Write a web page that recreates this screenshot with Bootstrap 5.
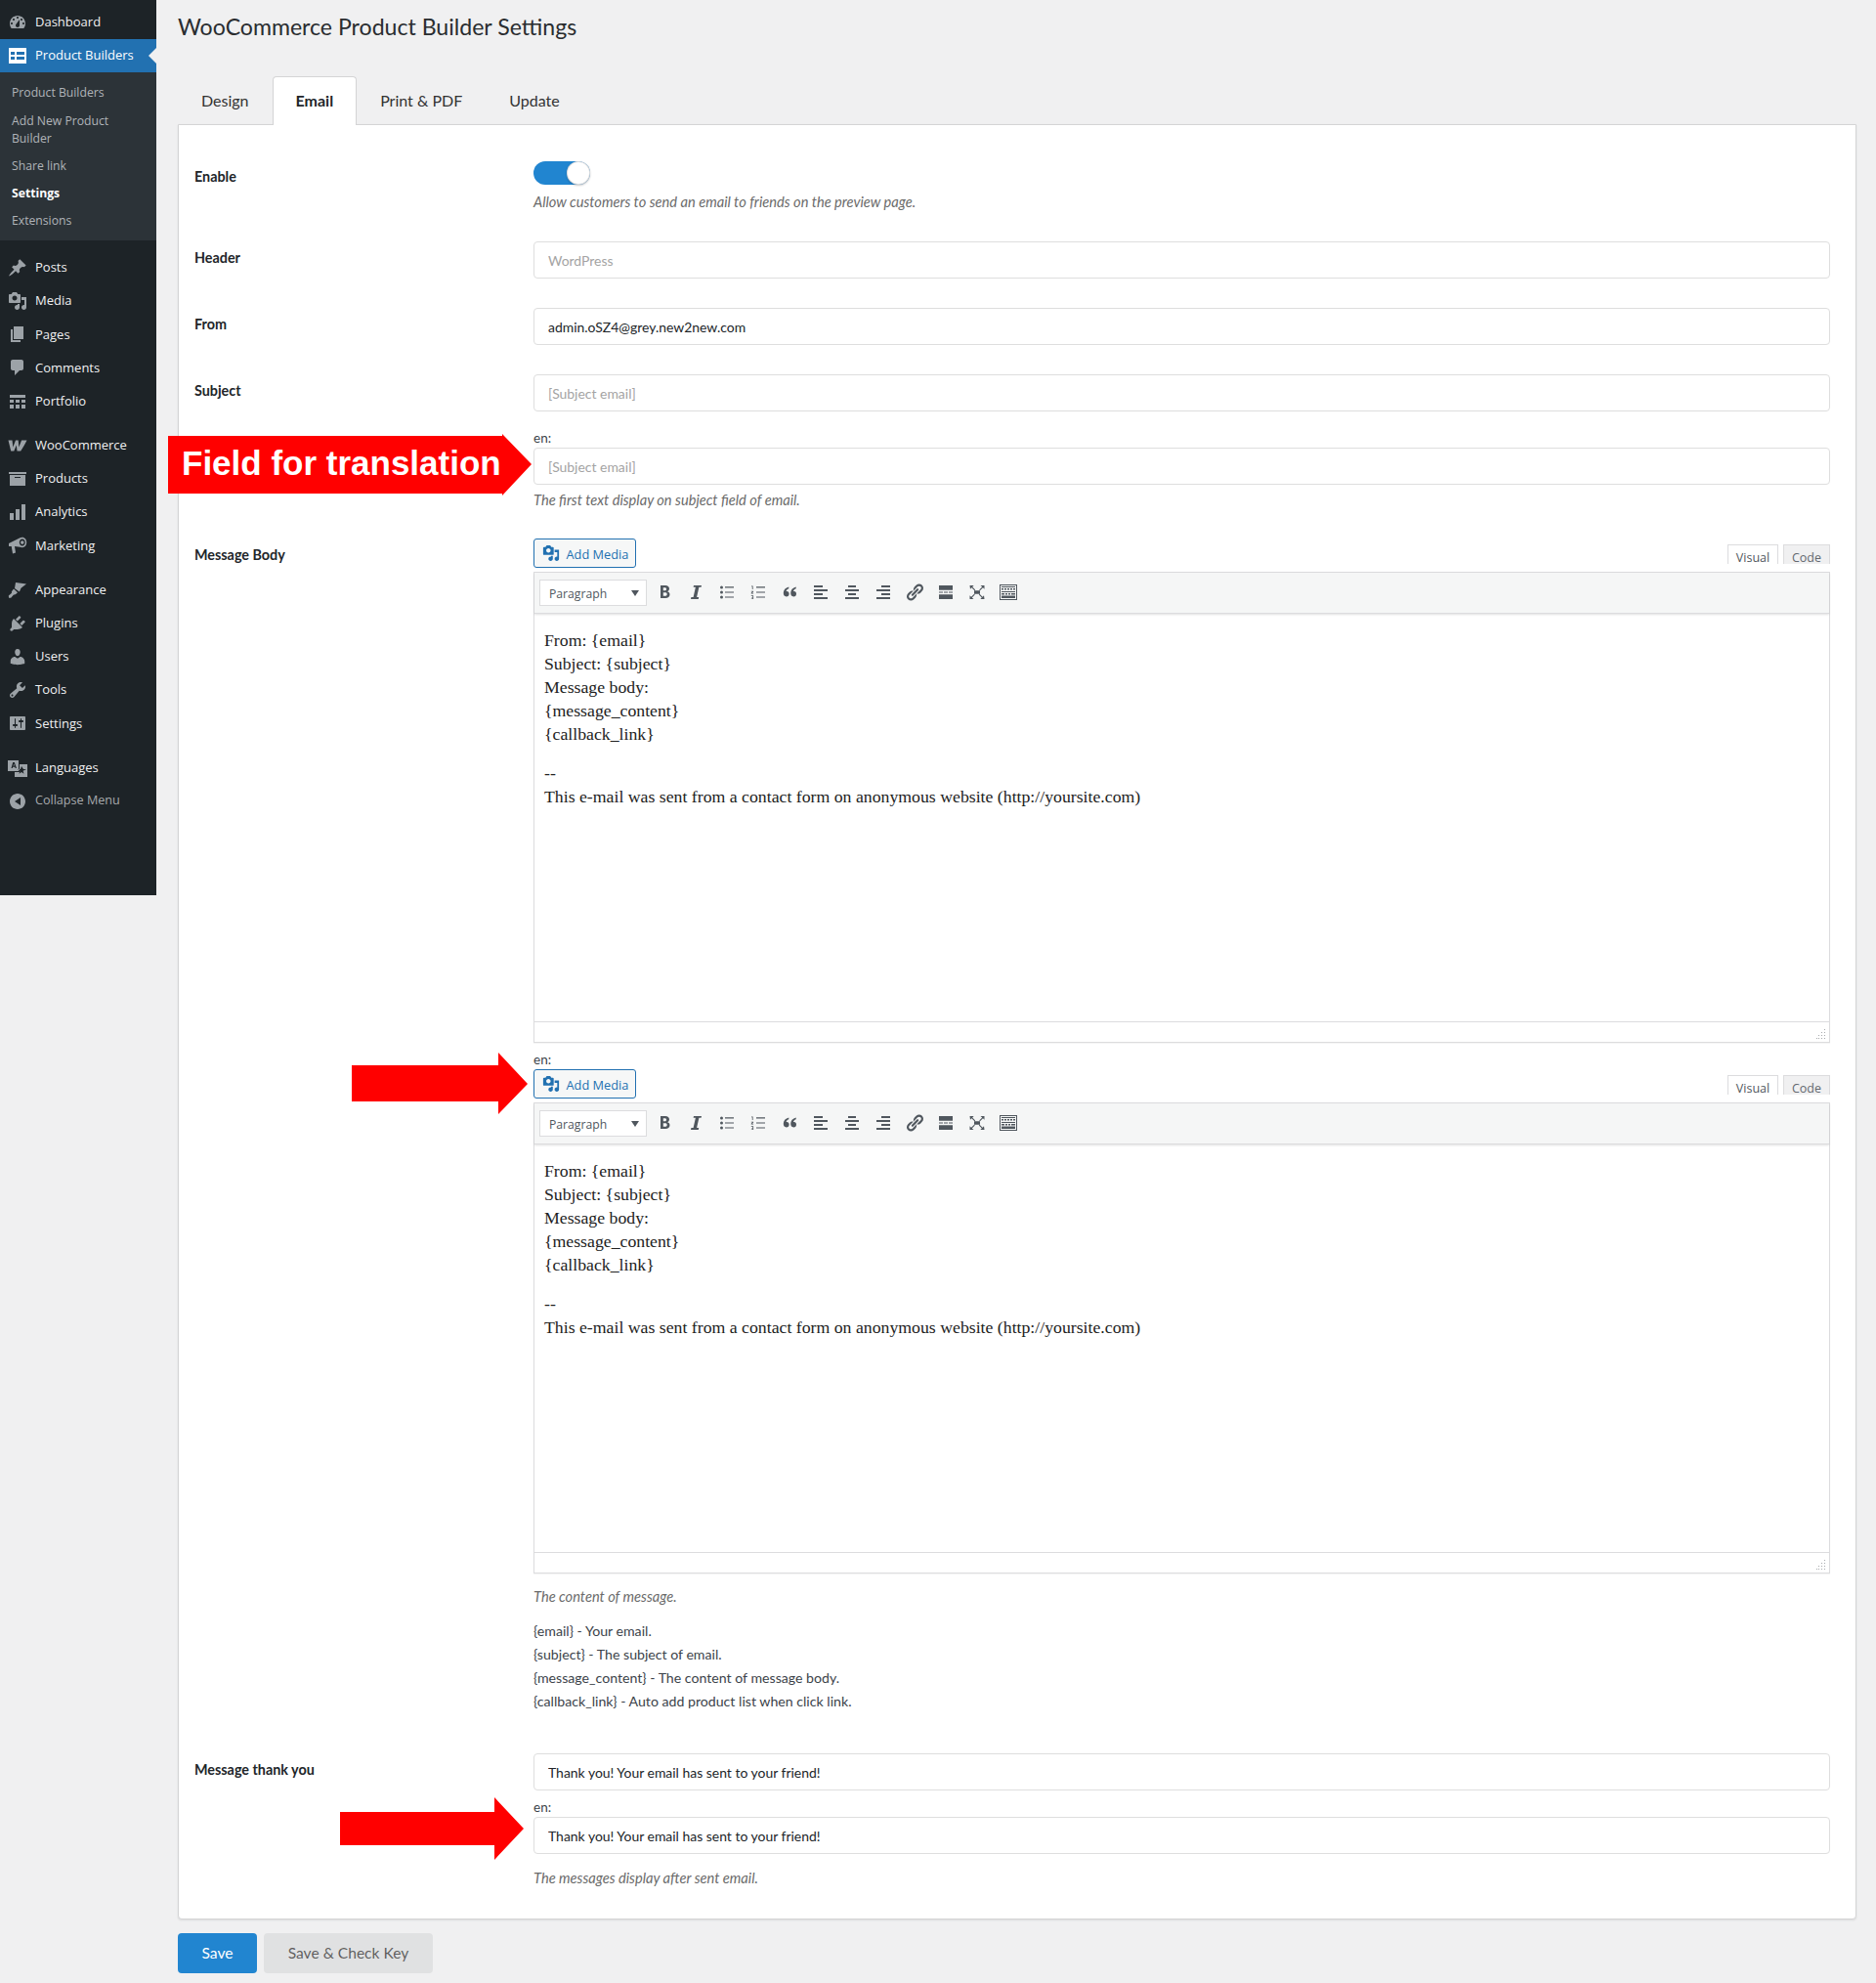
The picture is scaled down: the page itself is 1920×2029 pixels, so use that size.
<!DOCTYPE html>
<html lang="en">
<head>
<meta charset="utf-8">
<title>WooCommerce Product Builder Settings</title>
<link href="https://cdn.jsdelivr.net/npm/bootstrap@5.3.0/dist/css/bootstrap.min.css" rel="stylesheet">
<style>
html,body{background:#f0f0f1;margin:0}
body{font-family:Lato,"Liberation Sans",sans-serif;font-size:14px;color:#212529}
.pg{position:relative;width:1920px;height:2029px;overflow:hidden}
.side{width:160px;height:916px;background:#1d2327;padding-top:5.5px;font-family:"Open Sans",sans-serif;flex:none}
.mi{height:34.2px;display:flex;align-items:center;color:#f0f0f1;font-size:13px;padding-left:8px;position:relative;text-decoration:none}
.mi svg{width:20px;height:20px;fill:#9ca2a7;margin-right:8px;flex:none}
.mi.on{background:#2271b1;color:#fff}
.mi.on svg{fill:#fff}
.mi.on::after{content:"";position:absolute;right:0;top:9px;border:8px solid transparent;border-right-color:#f0f0f1;border-left:0}
.mi.dim{color:#a7aaad;font-size:12.6px}
.sp{margin-top:11px}
.sub{background:#2c3338;padding:7.5px 0 5.5px;font-size:12.2px;line-height:18px}
.sl{display:block;padding:5px 12px 5.2px;color:#b0b4b8}
.sl.cur{color:#fff;font-weight:700}
.wrap{flex:1;padding:0 20px 0 22px;min-width:0}
.ttl{font-family:Lato,sans-serif;font-size:23.1px;font-weight:400;line-height:32px;margin:11px 0 35px;color:#2a2d30}
.tbs{height:49px;border:0;flex-wrap:nowrap;margin-bottom:0;position:relative;z-index:1}
.tbs .nav-link{font-size:16px;color:#333;padding:0 23px;height:50px;line-height:48px;border:1px solid transparent;border-bottom:0;border-radius:4px 4px 0 0;margin:0}
.tbs .nav-link.active{background:#fff;color:#212529;font-weight:700;border-color:#d4d4d5;padding:0 23px}
.pan{background:#fff;border:1px solid #d4d4d5;border-radius:0 0 4px 4px;height:1837px;padding:37px 26px 0 16px;box-shadow:0 1px 2px rgba(34,36,38,.1)}
.rw{display:flex}
.lb{width:347px;flex:none;font-weight:700;font-size:14.35px;line-height:20px;margin-top:7px;color:#212529}
.lb.t1{margin-top:6px}
.fd{flex:1;min-width:0}
.tgl{width:58px;height:24px;background:#2185d0;border-radius:12px;position:relative}
.tgl::after{content:"";position:absolute;right:0;top:0;width:24px;height:24px;border-radius:50%;background:#fff;box-shadow:0 1px 2px rgba(34,36,38,.25),0 0 0 1px rgba(34,36,38,.15) inset}
.hp{font-style:italic;color:#6b6b6b;line-height:20px;font-size:14.65px}
.inp.form-control{height:38px;font-size:13.95px;padding:0 14px;border:1px solid #dedede;border-radius:4px;color:#212529;background:#fff;font-family:Lato,sans-serif}
.inp.form-control::placeholder{color:#a4a4a4;opacity:1}
.enl{line-height:16px;padding-bottom:2px;font-size:13.5px;color:#3c434a}
.m30{margin-top:30px}.m19{margin-top:19px}.m6{margin-top:6px}.m8{margin-top:8px}.m29{margin-top:29px}.m9{margin-top:9px}.m14{margin-top:14px}.m15{margin-top:15px}.m13{margin-top:13px}.m41{margin-top:41px}
.ehd{height:34px;display:flex;justify-content:space-between;align-items:flex-start;font-family:"Open Sans",sans-serif}
.amb.btn{height:30px;width:105px;padding:3px 0 0 8px;display:flex;align-items:center;font-size:12.8px;color:#2271b1;border:1px solid #2271b1;background:#f6f7f7;border-radius:3px;font-family:"Open Sans",sans-serif}
.amb svg{width:18px;height:18px;fill:#2271b1;margin-right:6.5px;margin-top:-3px}
.vt{display:flex;gap:5px;margin-top:6px}
.vt span{display:block;height:20px;border:1px solid #dcdcde;border-bottom:0;font-size:12.5px;line-height:12px;padding-top:7px;text-align:center;color:#50575e;background:#f6f7f7}
.vt .v1{width:52px;background:#fff}
.vt .v2{width:48px;background:#f0f0f1;color:#646970}
.edb{height:482px;border:1px solid #dcdcde;display:flex;flex-direction:column;box-shadow:0 1px 1px rgba(0,0,0,.04)}
.tb{height:42px;background:#f5f6f6;border-bottom:1px solid #dcdcde;box-shadow:0 1px 2px rgba(0,0,0,.12);display:flex;align-items:center;padding-left:5px;font-family:"Open Sans",sans-serif;flex:none;position:relative}
.fsel{width:110px;height:27px;background:#fff;border:1px solid #dcdcde;font-size:12.2px;color:#50575e;padding-left:9px;line-height:27px;position:relative;flex:none}
.fsel::after{content:"";position:absolute;right:7px;top:10px;border:4.500px solid transparent;border-top:6px solid #50575e;border-bottom:0}
.ti{width:32px;display:flex;justify-content:center;flex:none;margin-top:-2px}
.ti.fst{margin-left:2px}
.ti svg{width:20px;height:20px;fill:#50575e}
.edc{flex:1;padding:15px 8px 16px 10px;font-family:"Liberation Serif",serif;font-size:17.75px;line-height:24px;color:#222}
.edc p{margin:0 0 16px}
.est{height:21px;border-top:1px solid #dcdcde;position:relative;flex:none}
.rsz{position:absolute;right:3px;bottom:3px;width:10px;height:10px;display:block;fill:#a7aaad}
.lst{line-height:24px;color:#3c434a;font-size:14.15px}
.sb1.btn{width:81px;height:41px;background:#2185d0;border:0;color:#fff;font-size:15.6px;padding:0;border-radius:4px;font-weight:400}
.sb2.btn{width:173px;height:41px;background:#e0e1e2;border:0;color:rgba(0,0,0,.6);font-size:15.6px;padding:0;border-radius:4px}
.bts{margin-top:14px;display:flex;gap:7px}
.arw{position:absolute;z-index:5}
.arw svg{display:block}
.a1{left:172px;top:444px;width:372px;height:63px}
.a2{left:360px;top:1077px;width:180px;height:63px}
.a3{left:348px;top:1839px;width:188px;height:64px}
.atx{position:absolute;left:14px;top:0;height:61px;color:#fff;font:700 35px/60px "Liberation Sans",sans-serif;white-space:nowrap}
</style>
</head>
<body>
<svg width="0" height="0" class="position-absolute">
<defs>
<symbol id="i-media" viewBox="0 0 20 20"><path d="M13 11V4c0-.55-.45-1-1-1h-1.670L9 1H5L3.670 3H2c-.55 0-1 .45-1 1v7c0 .55.45 1 1 1h10c.55 0 1-.45 1-1zM7 4.500c1.380 0 2.500 1.120 2.500 2.500S8.380 9.500 7 9.500 4.500 8.380 4.500 7 5.620 4.500 7 4.500zM14 6h5v10.500c0 1.380-1.120 2.500-2.500 2.500S14 17.880 14 16.500s1.120-2.500 2.500-2.500c.17 0 .34.020.5.050V9h-3V6zm-4 8.050V13h2v3.500c0 1.380-1.120 2.500-2.500 2.500S7 17.880 7 16.500 8.120 14 9.500 14c.17 0 .34.020.5.050z" fill-rule="evenodd"/></symbol>
<symbol id="t-b" viewBox="0 0 20 20"><path fill-rule="evenodd" d="M6 3h5c2.500 0 4 1.300 4 3.300 0 1.400-.7 2.400-1.900 2.900 1.500.4 2.400 1.500 2.400 3.100 0 2.400-1.700 3.700-4.500 3.700H6V3zm2.800 2.200v3h1.700c1 0 1.600-.6 1.600-1.500s-.6-1.500-1.600-1.500H8.800zm0 5.100v3.500h2c1.200 0 1.900-.7 1.900-1.800s-.7-1.700-1.900-1.700h-2z"/></symbol>
<symbol id="t-i" viewBox="0 0 20 20"><path d="M8 3h8l-.4 1.800h-2.200L11.100 15h2.100l-.4 2H5l.4-2h2.200L9.900 4.800H7.600z"/></symbol>
<symbol id="t-ul" viewBox="0 0 20 20"><circle cx="4.500" cy="5" r="1.500"/><circle cx="4.500" cy="10" r="1.500"/><circle cx="4.500" cy="15" r="1.500"/><path d="M8 4.300h9v1.200H8zM8 9.400h9v1.200H8zM8 14.400h9v1.200H8z"/></symbol>
<symbol id="t-ol" viewBox="0 0 20 20"><path d="M3 3.500h1.600v3.600h-.8V4.300H3zM2.800 8.700h2.300v.7l-1.300 1.300h1.300v.7H2.700v-.7l1.400-1.300H2.800zM2.800 13.300h2.300v3.800H2.800v-.7h1.500v-.9H3.200v-.6h1.100v-.9H2.800z"/><path d="M8 4.300h9v1.200H8zM8 9.400h9v1.200H8zM8 14.400h9v1.200H8z"/></symbol>
<symbol id="t-q" viewBox="0 0 20 20"><path d="M9.300 4.500v1.700c-1.700.6-2.500 1.500-2.700 2.800.3-.1.500-.1.800-.1 1.300 0 2.200 1 2.200 2.500 0 1.700-1 3-2.800 3-1.800 0-3-1.400-3-3.600 0-3 2-5.500 5.500-6.300zM16.700 4.500v1.700c-1.700.6-2.500 1.500-2.700 2.800.3-.1.500-.1.800-.1 1.300 0 2.200 1 2.200 2.500 0 1.700-1 3-2.800 3-1.800 0-3-1.400-3-3.600 0-3 2-5.500 5.500-6.300z"/></symbol>
<symbol id="t-al" viewBox="0 0 20 20"><path d="M12 5V3H3v2h9zm5 4V7H3v2h14zm-5 4v-2H3v2h9zm5 4v-2H3v2h14z"/></symbol>
<symbol id="t-ac" viewBox="0 0 20 20"><path d="M14 5V3H6v2h8zm3 4V7H3v2h14zm-3 4v-2H6v2h8zm3 4v-2H3v2h14z"/></symbol>
<symbol id="t-ar" viewBox="0 0 20 20"><path d="M17 5V3H8v2h9zm0 4V7H3v2h14zm0 4v-2H8v2h9zm0 4v-2H3v2h14z"/></symbol>
<symbol id="t-ln" viewBox="0 0 20 20"><path d="M17.740 2.760c1.680 1.690 1.680 4.410 0 6.100l-1.530 1.520c-1.120 1.120-2.700 1.470-4.140 1.090l2.620-2.610.76-.77.76-.76c.84-.84.84-2.200 0-3.040-.84-.85-2.200-.85-3.040 0l-.77.76-3.380 3.380c-.37-1.440-.02-3.020 1.100-4.140l1.520-1.530c1.690-1.680 4.420-1.680 6.100 0zM8.590 13.430l5.340-5.340c.42-.42.42-1.100 0-1.520-.44-.43-1.130-.39-1.530 0l-5.330 5.340c-.42.42-.42 1.100 0 1.520.44.430 1.130.39 1.520 0zm-.76 2.290l4.140-4.140c.37 1.440.02 3.020-1.100 4.140l-1.520 1.530c-1.690 1.680-4.420 1.680-6.100 0-1.680-1.690-1.680-4.420 0-6.100l1.530-1.520c1.120-1.120 2.700-1.470 4.140-1.100l-4.140 4.150c-.85.840-.85 2.200 0 3.050.84.840 2.200.840 3.040 0z"/></symbol>
<symbol id="t-mr" viewBox="0 0 20 20"><path d="M3 3h14v4.700H3zM3 12.300h14V17H3zM3 9.400h4v1.200H3zM8 9.400h4v1.200H8zM13 9.400h4v1.200h-4z"/></symbol>
<symbol id="t-fs" viewBox="0 0 20 20"><path d="M7 8.300h6v3.400H7zM2.500 3h4.200L5.200 4.500l3 3-.8.8-3-3L3 6.800zM17.500 3v3.800L16 5.300l-3 3-.8-.8 3-3L13.500 3zM2.500 17v-3.800L4 14.700l3-3 .8.8-3 3L6.500 17zM17.500 17h-4.200l1.500-1.500-3-3 .8-.8 3 3L17 13.200z"/></symbol>
<symbol id="t-kb" viewBox="0 0 20 20"><path fill-rule="evenodd" d="M1 2h18v16H1zM2 3v14h16V3zM3 4h14v1H3zM3 6h2v1.500H3zM6 6h2v1.500H6zM9 6h2v1.500H9zM12 6h2v1.500h-2zM15 6h2v1.500h-2zM3 9h14v1H3zM3 11h3v1.500H3zM7 11h2v1.500H7zM10 11h2v1.500h-2zM13 11h4v1.500h-4zM3 13.500h14V16H3z"/></symbol>
<symbol id="t-rz" viewBox="0 0 10 10"><path d="M8 0h1v1H8zM8 3h1v1H8zM5 3h1v1H5zM8 6h1v1H8zM5 6h1v1H5zM2 6h1v1H2zM8 9h1v1H8zM5 9h1v1H5zM2 9h1v1H2zM0 9h1v1H0z"/></symbol>
</defs>
</svg>
<div class="pg d-flex">
  <nav class="side">
    <div class="mi"><svg viewBox="0 0 20 20"><path fill-rule="evenodd" d="M3.760 16h12.480c1.100-1.370 1.760-3.110 1.760-5 0-4.420-3.580-8-8-8s-8 3.580-8 8c0 1.890.66 3.630 1.760 5zM10 4c.55 0 1 .45 1 1s-.45 1-1 1-1-.45-1-1 .45-1 1-1zM6 6c.55 0 1 .45 1 1s-.45 1-1 1-1-.45-1-1 .45-1 1-1zm8 0c.55 0 1 .45 1 1s-.45 1-1 1-1-.45-1-1 .45-1 1-1zm-5.370 5.550L12 7v6c0 1.100-.9 2-2 2s-2-.9-2-2c0-.57.24-1.080.63-1.450zM4 10c.55 0 1 .45 1 1s-.45 1-1 1-1-.45-1-1 .45-1 1-1zm12 0c.55 0 1 .45 1 1s-.45 1-1 1-1-.45-1-1 .45-1 1-1z"/></svg>Dashboard</div>
    <div class="mi on"><svg viewBox="0 0 20 20"><path fill-rule="evenodd" d="M1 2h18v16H1zM3 6v3h4V6zM3 11v3h4v-3zM9 6v3h8V6zM9 11v3h8v-3z"/></svg>Product Builders</div>
    <div class="sub">
      <div class="sl">Product Builders</div><div class="sl">Add New Product Builder</div><div class="sl">Share link</div><div class="sl cur">Settings</div><div class="sl">Extensions</div>
    </div>
    <div class="mi sp"><svg viewBox="0 0 20 20"><path d="M10.440 3.020l1.820-1.820 6.360 6.350-1.830 1.820c-1.050-.68-2.480-.57-3.410.36l-.75.75c-.92.930-1.040 2.350-.35 3.410l-1.830 1.820-2.410-2.410-2.800 2.790c-.42.420-3.380 2.710-3.800 2.290s1.860-3.390 2.280-3.810l2.790-2.790L4.100 9.360l1.830-1.820c1.050.69 2.480.57 3.400-.36l.75-.75c.93-.92 1.050-2.350.36-3.410z"/></svg>Posts</div>
    <div class="mi"><svg><use href="#i-media"/></svg>Media</div>
    <div class="mi"><svg viewBox="0 0 20 20"><path d="M6 15V2h10v13H6zm-1 1h8v2H3V5h2v11z"/></svg>Pages</div>
    <div class="mi"><svg viewBox="0 0 20 20"><path d="M5 2h9c1.100 0 2 .9 2 2v7c0 1.100-.9 2-2 2h-2l-5 5v-5H5c-1.100 0-2-.9-2-2V4c0-1.100.9-2 2-2z"/></svg>Comments</div>
    <div class="mi"><svg viewBox="0 0 20 20"><path d="M2 3h16v3H2zM2 8h4v3H2zM8 8h4v3H8zM14 8h4v3h-4zM2 13h4v4H2zM8 13h4v4H8zM14 13h4v4h-4z"/></svg>Portfolio</div>
    <div class="mi sp"><svg viewBox="0 0 20 20"><path d="M0.500 4.500h4l.8 7 2.700-7h2.700l.6 7 2.800-7h5.400c-1.600 3.200-3.700 7-6.300 11h-3.700l-.7-6-2.500 6H3.200z"/></svg>WooCommerce</div>
    <div class="mi"><svg viewBox="0 0 20 20"><path fill-rule="evenodd" d="M19 3v2H1V3h18zM2 6h16v11H2V6zm11 3V8H7v1h6z"/></svg>Products</div>
    <div class="mi"><svg viewBox="0 0 20 20"><path d="M2 11h4v7H2zM8 7h4v11H8zM14 2h4v16h-4z"/></svg>Analytics</div>
    <div class="mi"><svg viewBox="0 0 20 20"><path fill-rule="evenodd" d="M1 8l11-5.500c.8-.5 1.600-.7 2.800-.7 2.600 0 4.400 2.300 4.400 5.200s-1.800 5.200-4.400 5.200c-.8 0-1.500-.1-2.300-.4L7 11l1 6.500-3 1-1.300-7.500L1 11zM14.800 3.500c-1.700 0-3 1.600-3 3.500s1.300 3.500 3 3.500 3-1.600 3-3.500-1.300-3.500-3-3.500zM14.800 5.200c1 0 1.700.8 1.700 1.800s-.7 1.800-1.700 1.800S13.100 8 13.100 7s.7-1.800 1.700-1.800z"/></svg>Marketing</div>
    <div class="mi sp"><svg viewBox="0 0 20 20"><path d="M8 2l11 1.500-5.500 4.200-1.600 3.800L7 8zM6 8.600l4 3.600-1.600 1.600c-.8.800-1.600.8-2.400.6l-2.800 3.400H1l-.2-2.200 3.200-2.800c-.3-.9-.1-1.800.5-2.400z"/></svg>Appearance</div>
    <div class="mi"><svg viewBox="0 0 20 20"><path d="M13.110 4.360L9.870 7.600 8 5.730l3.240-3.240c.35-.34 1.050-.2 1.560.32.52.51.66 1.210.31 1.550zm-8 1.770l.91-1.120 9.010 9.010-1.190.84c-.71.710-2.630 1.160-3.820 1.160H6.140L4.900 17.260c-.59.590-1.540.59-2.120 0-.59-.58-.59-1.530 0-2.120l1.240-1.240v-3.880c0-1.130.4-3.070 1.090-3.890zm7.260 3.970l3.240-3.240c.34-.35 1.040-.21 1.550.31.52.51.66 1.210.31 1.550l-3.240 3.250z"/></svg>Plugins</div>
    <div class="mi"><svg viewBox="0 0 20 20"><path d="M10 9.250c-2.270 0-2.730-3.440-2.730-3.440C7 4.020 7.820 2 9.970 2c2.160 0 2.980 2.020 2.710 3.810 0 0-.41 3.440-2.680 3.440zm0 2.570L12.720 10c2.390 0 4.520 2.330 4.520 4.530v2.490s-3.650 1.130-7.240 1.130c-3.650 0-7.240-1.130-7.240-1.130v-2.490c0-2.250 1.940-4.480 4.470-4.480z"/></svg>Users</div>
    <div class="mi"><svg viewBox="0 0 20 20"><path fill-rule="evenodd" d="M16.680 9.770c-1.340 1.340-3.300 1.670-4.950.99l-5.410 6.520c-.99.99-2.590.99-3.580 0s-.99-2.590 0-3.570l6.520-5.420c-.68-1.650-.35-3.610.99-4.950 1.280-1.280 3.120-1.620 4.720-1.060l-2.890 2.890 2.820 2.820 2.860-2.860c.53 1.580.18 3.400-1.080 4.660zM3.810 16.210c.4.390 1.040.39 1.430 0 .4-.4.400-1.040 0-1.430-.39-.4-1.030-.4-1.430 0-.39.39-.39 1.030 0 1.430z"/></svg>Tools</div>
    <div class="mi"><svg viewBox="0 0 20 20"><path fill-rule="evenodd" d="M18 16V4c0-.55-.45-1-1-1H3c-.55 0-1 .45-1 1v12c0 .55.45 1 1 1h14c.55 0 1-.45 1-1zM8 11h1c.55 0 1 .45 1 1s-.45 1-1 1H8v1.500c0 .28-.22.5-.5.5s-.5-.22-.5-.5V13H6c-.55 0-1-.45-1-1s.45-1 1-1h1V5.500c0-.28.22-.5.5-.5s.5.22.5.5V11zm5-2h-1c-.55 0-1-.45-1-1s.45-1 1-1h1V5.500c0-.28.22-.5.5-.5s.5.22.5.5V7h1c.55 0 1 .45 1 1s-.45 1-1 1h-1v5.500c0 .28-.22.5-.5.5s-.5-.22-.5-.5V9z"/></svg>Settings</div>
    <div class="mi sp"><svg viewBox="0 0 20 20"><path fill-rule="evenodd" d="M0 2h11v11H0zM3.500 10h1.200l.4-1.300h2.200l.4 1.300h1.200L6.800 4H5.200zM5.500 7.600l.7-2.200.7 2.200zM12 6h8v13H7v-5h5zM14 8l-1 3-3 0 2.400 1.800-.9 3 2.500-1.900 2.500 1.900-.9-3L19 11h-3z"/></svg>Languages</div>
    <div class="mi dim"><svg viewBox="0 0 20 20"><path fill-rule="evenodd" d="M18 10c0-4.420-3.580-8-8-8s-8 3.580-8 8 3.580 8 8 8 8-3.580 8-8zm-5-4v8l-6-4z"/></svg>Collapse Menu</div>
  </nav>

  <main class="wrap">
    <h1 class="ttl">WooCommerce Product Builder Settings</h1>
    <ul class="nav nav-tabs tbs">
      <li class="nav-item"><a class="nav-link" href="#">Design</a></li>
      <li class="nav-item"><a class="nav-link active" href="#">Email</a></li>
      <li class="nav-item"><a class="nav-link" href="#">Print &amp; PDF</a></li>
      <li class="nav-item"><a class="nav-link" href="#">Update</a></li>
    </ul>
    <div class="pan">
      <div class="rw">
        <div class="lb t1">Enable</div>
        <div class="fd">
          <div class="tgl"></div>
          <div class="hp m8">Allow customers to send an email to friends on the preview page.</div>
        </div>
      </div>
      <div class="rw m30">
        <div class="lb">Header</div>
        <div class="fd"><input class="form-control inp" placeholder="WordPress"></div>
      </div>
      <div class="rw m30">
        <div class="lb">From</div>
        <div class="fd"><input class="form-control inp" value="admin.oSZ4@grey.new2new.com"></div>
      </div>
      <div class="rw m30">
        <div class="lb">Subject</div>
        <div class="fd">
          <input class="form-control inp" placeholder="[Subject email]">
          <div class="enl m19">en:</div>
          <input class="form-control inp" placeholder="[Subject email]">
          <div class="hp m6">The first text display on subject field of email.</div>
        </div>
      </div>
      <div class="rw m29">
        <div class="lb">Message Body</div>
        <div class="fd">
          <div class="ehd">
            <button class="btn amb"><svg><use href="#i-media"/></svg>Add Media</button>
            <div class="vt"><span class="v1">Visual</span><span class="v2">Code</span></div>
          </div>
          <div class="edb">
            <div class="tb">
              <div class="fsel">Paragraph</div>
              <div class="ti fst"><svg><use href="#t-b"/></svg></div>
              <div class="ti"><svg><use href="#t-i"/></svg></div>
              <div class="ti"><svg><use href="#t-ul"/></svg></div>
              <div class="ti"><svg><use href="#t-ol"/></svg></div>
              <div class="ti"><svg><use href="#t-q"/></svg></div>
              <div class="ti"><svg><use href="#t-al"/></svg></div>
              <div class="ti"><svg><use href="#t-ac"/></svg></div>
              <div class="ti"><svg><use href="#t-ar"/></svg></div>
              <div class="ti"><svg><use href="#t-ln"/></svg></div>
              <div class="ti"><svg><use href="#t-mr"/></svg></div>
              <div class="ti"><svg><use href="#t-fs"/></svg></div>
              <div class="ti"><svg><use href="#t-kb"/></svg></div>
            </div>
            <div class="edc">
              <p>From: {email}<br>Subject: {subject}<br>Message body:<br>{message_content}<br>{callback_link}</p>
              <p>--<br>This e-mail was sent from a contact form on anonymous website (http://yoursite.com)</p>
            </div>
            <div class="est"><svg class="rsz"><use href="#t-rz"/></svg></div>
          </div>
          <div class="enl m9">en:</div>
          <div class="ehd">
            <button class="btn amb"><svg><use href="#i-media"/></svg>Add Media</button>
            <div class="vt"><span class="v1">Visual</span><span class="v2">Code</span></div>
          </div>
          <div class="edb">
            <div class="tb">
              <div class="fsel">Paragraph</div>
              <div class="ti fst"><svg><use href="#t-b"/></svg></div>
              <div class="ti"><svg><use href="#t-i"/></svg></div>
              <div class="ti"><svg><use href="#t-ul"/></svg></div>
              <div class="ti"><svg><use href="#t-ol"/></svg></div>
              <div class="ti"><svg><use href="#t-q"/></svg></div>
              <div class="ti"><svg><use href="#t-al"/></svg></div>
              <div class="ti"><svg><use href="#t-ac"/></svg></div>
              <div class="ti"><svg><use href="#t-ar"/></svg></div>
              <div class="ti"><svg><use href="#t-ln"/></svg></div>
              <div class="ti"><svg><use href="#t-mr"/></svg></div>
              <div class="ti"><svg><use href="#t-fs"/></svg></div>
              <div class="ti"><svg><use href="#t-kb"/></svg></div>
            </div>
            <div class="edc">
              <p>From: {email}<br>Subject: {subject}<br>Message body:<br>{message_content}<br>{callback_link}</p>
              <p>--<br>This e-mail was sent from a contact form on anonymous website (http://yoursite.com)</p>
            </div>
            <div class="est"><svg class="rsz"><use href="#t-rz"/></svg></div>
          </div>
          <div class="hp m14">The content of message.</div>
          <div class="lst m13">{email} - Your email.<br>{subject} - The subject of email.<br>{message_content} - The content of message body.<br>{callback_link} - Auto add product list when click link.</div>
        </div>
      </div>
      <div class="rw m41">
        <div class="lb">Message thank you</div>
        <div class="fd">
          <input class="form-control inp" value="Thank you! Your email has sent to your friend!">
          <div class="enl m9">en:</div>
          <input class="form-control inp" value="Thank you! Your email has sent to your friend!">
          <div class="hp m15">The messages display after sent email.</div>
        </div>
      </div>
    </div>
    <div class="bts">
      <button class="btn sb1">Save</button>
      <button class="btn sb2">Save &amp; Check Key</button>
    </div>
  </main>

  <div class="arw a1"><svg width="372" height="63"><path fill="#f00" d="M0 2H342V0L372 31 342 63V61H0z"/></svg><span class="atx">Field for translation</span></div>
  <div class="arw a2"><svg width="180" height="63"><path fill="#f00" d="M0 13H150V0L180 32 150 63V50H0z"/></svg></div>
  <div class="arw a3"><svg width="188" height="64"><path fill="#f00" d="M0 15H158V0L188 32 158 64V49H0z"/></svg></div>
</div>
<script src="https://cdn.jsdelivr.net/npm/bootstrap@5.3.0/dist/js/bootstrap.bundle.min.js"></script>
</body>
</html>
